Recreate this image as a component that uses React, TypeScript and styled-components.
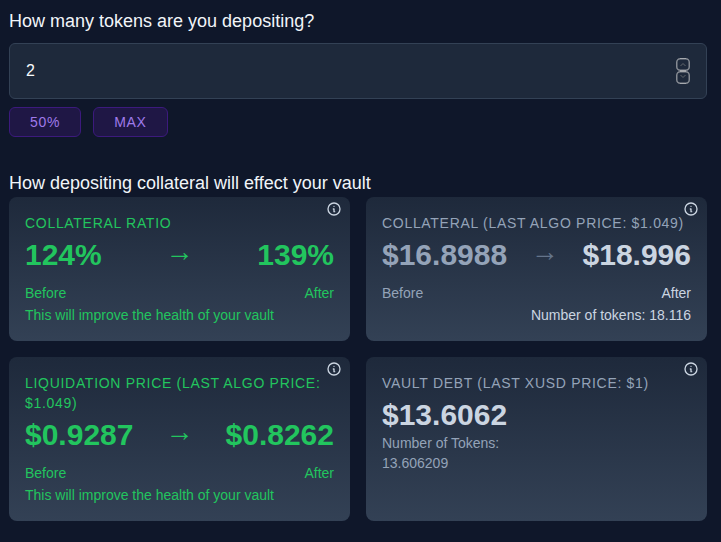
import React, { useState } from "react";
import styled, { createGlobalStyle } from "styled-components";

const GlobalStyle = createGlobalStyle`
  *, *::before, *::after { box-sizing: border-box; }
  body {
    margin: 0;
    background: #0f172a;
    font-family: "Liberation Sans", Arial, sans-serif;
    color: #f1f5f9;
  }
`;

type Tone = "good" | "muted" | "bright";

const toneColors: Record<Tone, string> = {
  good: "#22c55e",
  muted: "#94a3b8",
  bright: "#cbd5e1",
};

const Page = styled.main`
  padding: 7px 14px 21px 9px;
`;

const FieldLabel = styled.label`
  display: block;
  font-size: 18px;
  line-height: 28px;
`;

const Field = styled.div`
  display: flex;
  align-items: center;
  height: 56px;
  margin-top: 8px;
  padding: 0 16px;
  border: 1px solid #334155;
  border-radius: 6px;
  background: #1e293b;
`;

const AmountInput = styled.input`
  flex: 1;
  min-width: 0;
  padding: 0;
  border: 0;
  outline: 0;
  background: transparent;
  color: #f8fafc;
  font: 16px/24px "Liberation Sans", Arial, sans-serif;
  appearance: textfield;

  &::-webkit-inner-spin-button { display: none; }
`;

const Stepper = styled.div`
  display: flex;
  flex-direction: column;
`;

const StepButton = styled.button`
  display: block;
  width: 14px;
  height: 13px;
  padding: 0;
  border: 0;
  background: transparent;

  svg { display: block; }
`;

const PresetRow = styled.div`
  display: flex;
  gap: 12px;
  margin-top: 8px;
`;

const PresetButton = styled.button`
  padding: 4px 20px;
  border: 1px solid #3c1a7d;
  border-radius: 6px;
  background: #1f1745;
  color: #9f7aea;
  font: 14px/20px "Liberation Sans", Arial, sans-serif;
  letter-spacing: 0.05em;
`;

const SectionTitle = styled.h2`
  margin: 32px 0 0;
  font-size: 18px;
  font-weight: 400;
  line-height: 28px;
`;

const CardGrid = styled.div`
  display: grid;
  grid-template-columns: 1fr 1fr;
  gap: 16px;
`;

const Card = styled.section<{ $tone: Tone }>`
  position: relative;
  padding: 16px;
  border-radius: 8px;
  background: linear-gradient(to bottom, #1e293b, #334155);
  color: ${(p) => toneColors[p.$tone]};
  font-size: 14px;
  line-height: 20px;
`;

const InfoButton = styled.button`
  position: absolute;
  top: 4px;
  right: 8px;
  width: 16px;
  height: 16px;
  padding: 0;
  border: 0;
  background: transparent;
  color: #cbd5e1;

  svg { display: block; }
`;

const CardTitle = styled.h3`
  margin: 0 0 4px;
  font-size: 14px;
  font-weight: 400;
  line-height: 20px;
  letter-spacing: 0.05em;
  text-transform: uppercase;
`;

const SplitRow = styled.div`
  display: flex;
  align-items: flex-start;
  justify-content: space-between;
`;

const ValueRow = styled(SplitRow)`
  margin-bottom: 10px;
`;

const Value = styled.span<{ $tone: Tone }>`
  color: ${(p) => toneColors[p.$tone]};
  font-size: 30px;
  font-weight: 700;
  line-height: 36px;
`;

const Arrow = styled.span<{ $dim: boolean }>`
  color: ${(p) => (p.$dim ? "#64748b" : "inherit")};
  font-size: 28px;
  line-height: 30px;
`;

const Caption = styled.span<{ $tone: Tone }>`
  color: ${(p) => toneColors[p.$tone]};
`;

const Note = styled.p<{ $tone: Tone; $end: boolean }>`
  margin: 2px 0 0;
  color: ${(p) => toneColors[p.$tone]};
  text-align: ${(p) => (p.$end ? "right" : "left")};
`;

const DebtDetail = styled.div`
  display: flex;
  flex-direction: column;
`;

function InfoIcon() {
  return (
    <svg width="16" height="16" viewBox="0 0 24 24" fill="none" stroke="currentColor" strokeWidth="2" strokeLinecap="round" strokeLinejoin="round" aria-hidden="true">
      <path d="M13 16h-1v-4h-1m1-4h.01M21 12a9 9 0 11-18 0 9 9 0 0118 0z" />
    </svg>
  );
}

function StepIcon({ up }: { up: boolean }) {
  return (
    <svg width="14" height="13" viewBox="0 0 14 13" fill="none" aria-hidden="true">
      <rect x="0.75" y="0.75" width="12.5" height="11.5" rx="3.5" stroke="#858a92" strokeWidth="1.5" />
      <path d="M4 0.5h6M4 12.5h6" stroke="#a6a9ae" />
      <path d={up ? "M4.5 8L7 5.500 9.5 8" : "M4.5 4L7 6.500 9.5 4"} stroke="#62676c" />
    </svg>
  );
}

interface ChangeCardProps {
  title: string;
  before: string;
  after: string;
  note: string;
  improving?: boolean;
}

function ChangeCard({ title, before, after, note, improving = false }: ChangeCardProps) {
  const beforeTone: Tone = improving ? "good" : "muted";
  const afterTone: Tone = improving ? "good" : "bright";
  return (
    <Card $tone={beforeTone}>
      <InfoButton type="button" aria-label={`About ${title}`}><InfoIcon /></InfoButton>
      <CardTitle>{title}</CardTitle>
      <ValueRow>
        <Value $tone={beforeTone}>{before}</Value>
        <Arrow $dim={!improving}>→</Arrow>
        <Value $tone={afterTone}>{after}</Value>
      </ValueRow>
      <SplitRow>
        <Caption $tone={beforeTone}>Before</Caption>
        <Caption $tone={afterTone}>After</Caption>
      </SplitRow>
      <Note $tone={afterTone} $end={!improving}>{note}</Note>
    </Card>
  );
}

export default function App() {
  const [amount, setAmount] = useState("2");
  const step = (by: number) => setAmount(String(Number(amount) + by));

  return (
    <Page>
      <GlobalStyle />
      <FieldLabel htmlFor="amount">How many tokens are you depositing?</FieldLabel>
      <Field>
        <AmountInput id="amount" type="number" value={amount} onChange={(e) => setAmount(e.target.value)} />
        <Stepper>
          <StepButton type="button" aria-label="Increase" onClick={() => step(1)}><StepIcon up /></StepButton>
          <StepButton type="button" aria-label="Decrease" onClick={() => step(-1)}><StepIcon up={false} /></StepButton>
        </Stepper>
      </Field>
      <PresetRow>
        <PresetButton type="button">50%</PresetButton>
        <PresetButton type="button">MAX</PresetButton>
      </PresetRow>
      <SectionTitle>How depositing collateral will effect your vault</SectionTitle>
      <CardGrid>
        <ChangeCard improving title="Collateral Ratio" before="124%" after="139%" note="This will improve the health of your vault" />
        <ChangeCard title="Collateral (Last ALGO Price: $1.049)" before="$16.8988" after="$18.996" note="Number of tokens: 18.116" />
        <ChangeCard improving title="Liquidation Price (Last ALGO Price: $1.049)" before="$0.9287" after="$0.8262" note="This will improve the health of your vault" />
        <Card $tone="muted">
          <InfoButton type="button" aria-label="About vault debt"><InfoIcon /></InfoButton>
          <CardTitle>Vault Debt (Last xUSD Price: $1)</CardTitle>
          <DebtDetail>
            <Value $tone="bright">$13.6062</Value>
            <span>Number of Tokens:</span>
            <span>13.606209</span>
          </DebtDetail>
        </Card>
      </CardGrid>
    </Page>
  );
}
